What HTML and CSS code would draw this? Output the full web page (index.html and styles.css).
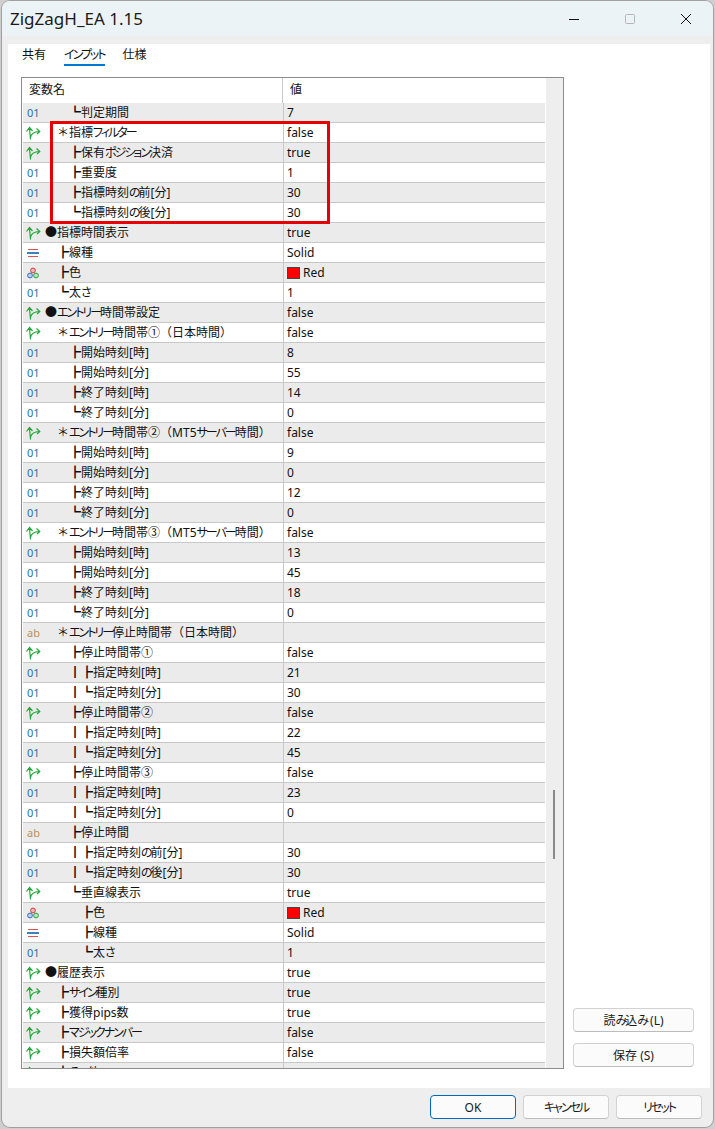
FILE: index.html
```html
<!DOCTYPE html>
<html lang="ja">
<head>
<meta charset="utf-8">
<title>ZigZagH_EA 1.15</title>
<link rel="stylesheet" href="styles.css">
</head>
<body>
<svg class="defs" width="0" height="0" aria-hidden="true">
  <symbol id="i-bool" viewBox="0 0 16 16">
    <path d="M5.5 14.5 L4.5 3 M1.5 6.5 L4.5 2.5 L7.5 6 M5.5 12.5 C6 9.5 8 6.8 14.5 6.5 M11.5 3.5 L14.8 6.5 L12 9" fill="none" stroke="#22a83c" stroke-width="1.2"/>
  </symbol>
  <symbol id="i-line" viewBox="0 0 16 16">
    <path d="M3 4.5 H13" stroke="#d9534f" stroke-width="1"/>
    <path d="M2 8 H14" stroke="#3f7fbf" stroke-width="2"/>
    <path d="M3 11.5 H13" stroke="#d9534f" stroke-width="1"/>
  </symbol>
  <symbol id="i-color" viewBox="0 0 16 16">
    <circle cx="8" cy="5.5" r="2.4" fill="#f3b6b6" stroke="#d23c3c"/>
    <circle cx="5" cy="10.5" r="2.4" fill="#b6cff3" stroke="#2f6fc0"/>
    <circle cx="11" cy="10.5" r="2.4" fill="#b6e6bf" stroke="#2aa33f"/>
  </symbol>
</svg>
<div class="window">
  <header class="titlebar">
    <div class="title">ZigZagH_EA 1.15</div>
    <div class="controls">
      <svg class="ctl" viewBox="0 0 12 12"><path d="M1 6.5 H11" stroke="#111" stroke-width="1"/></svg>
      <svg class="ctl" viewBox="0 0 12 12"><rect x="1.5" y="1.5" width="9" height="9" rx="1" fill="none" stroke="#b5b5b5"/></svg>
      <svg class="ctl" viewBox="0 0 12 12"><path d="M1 1 L11 11 M11 1 L1 11" stroke="#111" stroke-width="1"/></svg>
    </div>
  </header>
  <main class="panel">
    <nav class="tabs">
      <span class="tab">共有</span>
      <span class="tab active"><span class="k">インプット</span></span>
      <span class="tab">仕様</span>
    </nav>
    <div class="content">
      <section class="list">
        <div class="main">
          <div class="head"><div class="hname">変数名</div><div class="hval">値</div></div>
          <div class="rows">
            <div class="row"><span class="ic num">01</span><span class="name">　　┗判定期間</span><span class="val">7</span></div>
            <div class="row"><svg class="ic"><use href="#i-bool"/></svg><span class="name">　＊指標<span class="k">フィルター</span></span><span class="val">false</span></div>
            <div class="row"><svg class="ic"><use href="#i-bool"/></svg><span class="name">　　┣保有<span class="k">ポジション</span>決済</span><span class="val">true</span></div>
            <div class="row"><span class="ic num">01</span><span class="name">　　┣重要度</span><span class="val">1</span></div>
            <div class="row"><span class="ic num">01</span><span class="name">　　┣指標時刻<span class="k">の</span>前[分]</span><span class="val">30</span></div>
            <div class="row"><span class="ic num">01</span><span class="name">　　┗指標時刻<span class="k">の</span>後[分]</span><span class="val">30</span></div>
            <div class="row"><svg class="ic"><use href="#i-bool"/></svg><span class="name">●指標時間表示</span><span class="val">true</span></div>
            <div class="row"><svg class="ic"><use href="#i-line"/></svg><span class="name">　┣線種</span><span class="val">Solid</span></div>
            <div class="row"><svg class="ic"><use href="#i-color"/></svg><span class="name">　┣色</span><span class="val"><i class="swatch"></i>Red</span></div>
            <div class="row"><span class="ic num">01</span><span class="name">　┗太<span class="k">さ</span></span><span class="val">1</span></div>
            <div class="row"><svg class="ic"><use href="#i-bool"/></svg><span class="name">●<span class="k">エントリー</span>時間帯設定</span><span class="val">false</span></div>
            <div class="row"><svg class="ic"><use href="#i-bool"/></svg><span class="name">　＊<span class="k">エントリー</span>時間帯①（日本時間）</span><span class="val">false</span></div>
            <div class="row"><span class="ic num">01</span><span class="name">　　┣開始時刻[時]</span><span class="val">8</span></div>
            <div class="row"><span class="ic num">01</span><span class="name">　　┣開始時刻[分]</span><span class="val">55</span></div>
            <div class="row"><span class="ic num">01</span><span class="name">　　┣終了時刻[時]</span><span class="val">14</span></div>
            <div class="row"><span class="ic num">01</span><span class="name">　　┗終了時刻[分]</span><span class="val">0</span></div>
            <div class="row"><svg class="ic"><use href="#i-bool"/></svg><span class="name">　＊<span class="k">エントリー</span>時間帯②（MT5<span class="k">サーバー</span>時間）</span><span class="val">false</span></div>
            <div class="row"><span class="ic num">01</span><span class="name">　　┣開始時刻[時]</span><span class="val">9</span></div>
            <div class="row"><span class="ic num">01</span><span class="name">　　┣開始時刻[分]</span><span class="val">0</span></div>
            <div class="row"><span class="ic num">01</span><span class="name">　　┣終了時刻[時]</span><span class="val">12</span></div>
            <div class="row"><span class="ic num">01</span><span class="name">　　┗終了時刻[分]</span><span class="val">0</span></div>
            <div class="row"><svg class="ic"><use href="#i-bool"/></svg><span class="name">　＊<span class="k">エントリー</span>時間帯③（MT5<span class="k">サーバー</span>時間）</span><span class="val">false</span></div>
            <div class="row"><span class="ic num">01</span><span class="name">　　┣開始時刻[時]</span><span class="val">13</span></div>
            <div class="row"><span class="ic num">01</span><span class="name">　　┣開始時刻[分]</span><span class="val">45</span></div>
            <div class="row"><span class="ic num">01</span><span class="name">　　┣終了時刻[時]</span><span class="val">18</span></div>
            <div class="row"><span class="ic num">01</span><span class="name">　　┗終了時刻[分]</span><span class="val">0</span></div>
            <div class="row"><span class="ic str">ab</span><span class="name">　＊<span class="k">エントリー</span>停止時間帯（日本時間）</span><span class="val"></span></div>
            <div class="row"><svg class="ic"><use href="#i-bool"/></svg><span class="name">　　┣停止時間帯①</span><span class="val">false</span></div>
            <div class="row"><span class="ic num">01</span><span class="name">　　┃┣指定時刻[時]</span><span class="val">21</span></div>
            <div class="row"><span class="ic num">01</span><span class="name">　　┃┗指定時刻[分]</span><span class="val">30</span></div>
            <div class="row"><svg class="ic"><use href="#i-bool"/></svg><span class="name">　　┣停止時間帯②</span><span class="val">false</span></div>
            <div class="row"><span class="ic num">01</span><span class="name">　　┃┣指定時刻[時]</span><span class="val">22</span></div>
            <div class="row"><span class="ic num">01</span><span class="name">　　┃┗指定時刻[分]</span><span class="val">45</span></div>
            <div class="row"><svg class="ic"><use href="#i-bool"/></svg><span class="name">　　┣停止時間帯③</span><span class="val">false</span></div>
            <div class="row"><span class="ic num">01</span><span class="name">　　┃┣指定時刻[時]</span><span class="val">23</span></div>
            <div class="row"><span class="ic num">01</span><span class="name">　　┃┗指定時刻[分]</span><span class="val">0</span></div>
            <div class="row"><span class="ic str">ab</span><span class="name">　　┣停止時間</span><span class="val"></span></div>
            <div class="row"><span class="ic num">01</span><span class="name">　　┃┣指定時刻<span class="k">の</span>前[分]</span><span class="val">30</span></div>
            <div class="row"><span class="ic num">01</span><span class="name">　　┃┗指定時刻<span class="k">の</span>後[分]</span><span class="val">30</span></div>
            <div class="row"><svg class="ic"><use href="#i-bool"/></svg><span class="name">　　┗垂直線表示</span><span class="val">true</span></div>
            <div class="row"><svg class="ic"><use href="#i-color"/></svg><span class="name">　　　┣色</span><span class="val"><i class="swatch"></i>Red</span></div>
            <div class="row"><svg class="ic"><use href="#i-line"/></svg><span class="name">　　　┣線種</span><span class="val">Solid</span></div>
            <div class="row"><span class="ic num">01</span><span class="name">　　　┗太<span class="k">さ</span></span><span class="val">1</span></div>
            <div class="row"><svg class="ic"><use href="#i-bool"/></svg><span class="name">●履歴表示</span><span class="val">true</span></div>
            <div class="row"><svg class="ic"><use href="#i-bool"/></svg><span class="name">　┣<span class="k">サイン</span>種別</span><span class="val">true</span></div>
            <div class="row"><svg class="ic"><use href="#i-bool"/></svg><span class="name">　┣獲得pips数</span><span class="val">true</span></div>
            <div class="row"><svg class="ic"><use href="#i-bool"/></svg><span class="name">　┣<span class="k">マジックナンバー</span></span><span class="val">false</span></div>
            <div class="row"><svg class="ic"><use href="#i-bool"/></svg><span class="name">　┣損失額倍率</span><span class="val">false</span></div>
            <div class="row"><svg class="ic"><use href="#i-bool"/></svg><span class="name">　┣<span class="k">その</span>他</span><span class="val">true</span></div>
          </div>
        </div>
        <div class="scrollbar"><div class="thumb"></div></div>
        <div class="highlight"></div>
      </section>
      <aside class="side">
        <button class="btn side-btn">読<span class="k">み</span>込<span class="k">み</span> (L)</button>
        <button class="btn side-btn">保存 (S)</button>
      </aside>
    </div>
  </main>
  <footer class="footer">
    <button class="btn foot-btn primary">OK</button>
    <button class="btn foot-btn"><span class="k">キャンセル</span></button>
    <button class="btn foot-btn"><span class="k">リセット</span></button>
  </footer>
</div>
</body>
</html>
```
FILE: styles.css
```css
* { box-sizing: border-box; }
html, body { margin: 0; height: 100%; }
body {
  background: #cfcfcf;
  padding: 1px 2px 2px 2px;
  overflow: hidden;
  font-family: "Noto Sans", "Noto Sans CJK JP", sans-serif;
  font-size: 12px;
  color: #111;
}
.k {
  font-feature-settings: "palt";
  letter-spacing: -2px;
}
.defs { position: absolute; }
.window {
  height: 1126px;
  background: #eeeeee;
  border-radius: 8px;
  overflow: hidden;
  display: flex;
  flex-direction: column;
  box-shadow: 0 0 0 1px #a0a0a0;
}
.titlebar {
  height: 35px;
  background: #ebf3f7;
  display: flex;
  align-items: center;
  justify-content: space-between;
  flex: none;
}
.title { font-size: 17px; padding-left: 8px; color: #1a1a1a; }
.controls { display: flex; align-items: center; gap: 44px; padding-right: 21px; padding-top: 1px; }
.ctl { width: 12px; height: 12px; display: block; }

.panel {
  margin: 8px 3px 0 6px;
  height: 1044px;
  flex: none;
  background: #fff;
  display: flex;
  flex-direction: column;
  padding: 0 0 19px 13px;
}
.tabs { height: 33px; display: flex; gap: 18px; padding: 0 0 0 1px; flex: none; }
.tab { height: 22px; line-height: 21px; }
.tab.active { border-bottom: 2px solid #0078d4; }

.content { display: flex; flex: 1; min-height: 0; }
.list {
  position: relative;
  width: 543px;
  height: 992px;
  border: 1px solid #8c8c8c;
  background: #fff;
  display: flex;
  overflow: hidden;
  padding-left: 1px;
}
.main { width: 523px; flex: none; overflow: hidden; }
.head { height: 25px; display: flex; }
.hname { width: 260px; padding-left: 6px; line-height: 24px; border-right: 1px solid #c8c8c8; }
.hval { padding-left: 7px; line-height: 24px; }
.rows { height: 966px; overflow: hidden; }
.row {
  height: 20px;
  display: flex;
  align-items: center;
  border-bottom: 1px solid #c8c8c8;
  margin-right: 1px;
}
.row:nth-child(odd) { background: #ebebeb; }
.ic { width: 22px; height: 16px; flex: none; display: block; padding-left: 2px; }
svg.ic { width: 22px; padding: 0 4px 0 2px; }
.num, .str { font-size: 11px; line-height: 16px; padding-left: 4px; }
.num { color: #2a6fa8; }
.str { color: #b8925a; }
.name {
  width: 238px;
  flex: none;
  white-space: pre;
  overflow: hidden;
  height: 19px;
  line-height: 19px;
}
.val {
  flex: 1;
  height: 19px;
  line-height: 19px;
  padding-left: 3px;
  border-left: 1px solid #c8c8c8;
  display: flex;
  align-items: center;
}
.swatch { width: 13px; height: 12px; background: #ff0000; border: 1px solid #444; margin-right: 3px; }
.scrollbar { width: 17px; margin-left: 0; background: #eeeeee; flex: none; padding: 712px 0 0 7px; }
.thumb { width: 2px; height: 69px; background: #8a8a8a; }
.highlight {
  position: absolute;
  left: 28px;
  top: 43px;
  width: 280px;
  height: 103px;
  border: 3px solid #e60000;
}
.side {
  width: 121px;
  margin-left: 9px;
  height: 992px;
  display: flex;
  flex-direction: column;
  justify-content: flex-end;
  gap: 11px;
  padding-bottom: 2px;
}
.btn {
  font: inherit;
  color: #1a1a1a;
  background: #fbfbfb;
  border: 1px solid #d2d2d2;
  border-bottom-color: #bcbcbc;
  border-radius: 4px;
  padding: 0;
}
.side-btn { height: 24px; width: 121px; }
.footer {
  display: flex;
  justify-content: flex-end;
  gap: 7px;
  padding: 7px 11px 0 0;
}
.foot-btn { width: 86px; height: 24px; }
.primary { border: 1px solid #0067c0; }
```
